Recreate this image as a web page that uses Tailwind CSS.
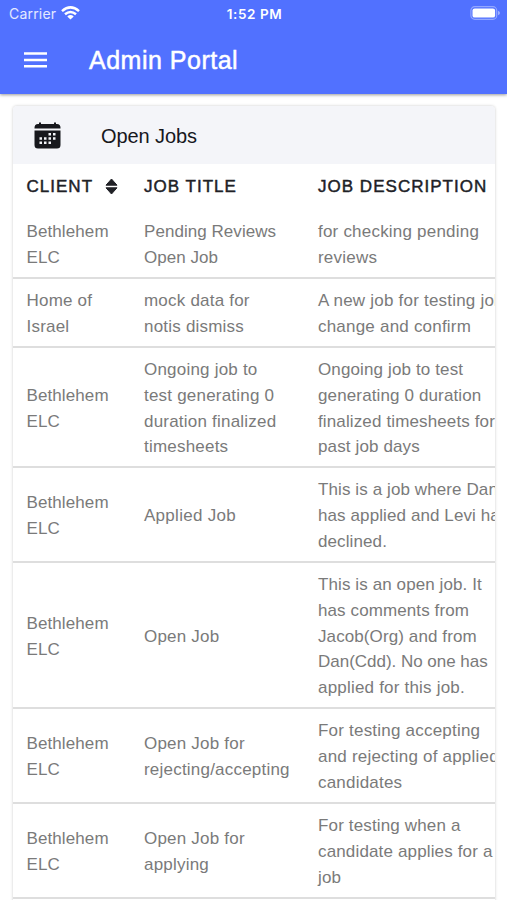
<!DOCTYPE html>
<html lang="en">
<head>
<meta charset="utf-8">
<title>Admin Portal</title>
<script src="https://cdn.jsdelivr.net/npm/@tailwindcss/browser@4"></script>
</head>
<body class="h-[900px] w-[507px] overflow-hidden bg-white font-['Liberation_Sans',Arial,sans-serif]">
<header class="relative h-[94px] bg-[#5171ff] text-white shadow-[0_1px_3px_rgba(0,0,0,0.4)]">
  <div class="grid h-7 grid-cols-3 items-center pr-[7px] pl-[9px]">
    <div class="flex items-center gap-[5px]">
      <span class="font-['Inter','Liberation_Sans',sans-serif] text-[14px] leading-7 tracking-[0.2px] text-white/85">Carrier</span>
      <svg class="-mt-[2px] h-[14px] w-[19px]" viewBox="0 0 19 14" fill="none" stroke="currentColor" stroke-width="2.5"><path d="M1 5.1Q9.500-2.300 18 5.100M4 8.300Q9.500 3.600 15 8.300"/><path d="M9.500 13.600L6.300 10.400Q9.500 7.700 12.700 10.400Z" fill="currentColor" stroke="none"/></svg>
    </div>
    <span class="text-center font-['Inter','Liberation_Sans',sans-serif] text-[13.500px] leading-7 font-semibold tracking-[0.550px] whitespace-nowrap">1:52 PM</span>
    <svg class="mt-[-2px] h-[14px] w-[30px] justify-self-end" viewBox="0 0 30 14"><rect x=".9" y=".7" width="25.800" height="12.600" rx="3.800" fill="none" stroke="#fff" stroke-opacity=".38" stroke-width="1.200"/><rect x="2.500" y="2.400" width="22.600" height="9.200" rx="2.200" fill="#fff"/><path d="M28 4.700Q30 5.500 30 7T28 9.300Z" fill="#fff" fill-opacity=".45"/></svg>
  </div>
  <div class="flex h-[64px] items-center pl-6">
    <svg class="h-4 w-[23px]" viewBox="0 0 23 16" stroke="currentColor" stroke-width="2.600"><path d="M0 1.500H23M0 8H23M0 14.300H23"/></svg>
    <h1 class="ml-[42px] text-[25px] leading-8 tracking-[0.500px] whitespace-nowrap [-webkit-text-stroke:0.5px_currentColor]">Admin Portal</h1>
  </div>
</header>
<main class="px-[13px] pt-3">
  <section class="h-[820px] w-[482px] overflow-hidden rounded-t-[4px] bg-white shadow-[0_0_3px_rgba(0,0,0,0.22)]">
    <div class="flex h-[58px] items-center bg-[#f4f5f9] pl-[21px] text-[#17181d]">
      <svg class="h-[27px] w-[27px]" viewBox="0 0 27 27" fill="currentColor"><path d="M5 .5h2v1.500h13V.5h2v1.500h1q3.500 0 3.500 3.800V6.500H.5V5.800Q.5 2 4 2h1ZM.5 8.500h26V23q0 3.500-3.500 3.500H4Q.5 26.500.5 23Z"/><path fill="#f4f5f9" d="M14.500 11h2.500v2.500h-2.500zM19 11h2.500v2.500h-2.500zM5.500 15.200h2.500v2.500h-2.500zM10 15.200h2.500v2.500h-2.500zM14.500 15.200h2.500v2.500h-2.500zM19 15.200h2.500v2.500h-2.500zM5.500 19.500h2.500v2.500h-2.500zM10 19.500h2.500v2.500h-2.500zM14.500 19.500h2.500v2.500h-2.500z"/></svg>
      <h2 class="ml-10 pt-px text-[20px] tracking-[-0.080px]">Open Jobs</h2>
    </div>
    <div class="grid h-[45px] grid-cols-[117.500px_174px_190px] items-center pl-[13.500px] text-[17px] tracking-[1.020px] whitespace-nowrap text-[#202126] [-webkit-text-stroke:0.45px_currentColor]">
      <div class="flex items-center gap-[12px]"><span>CLIENT</span><svg class="h-[17px] w-[13px]" viewBox="0 0 13 17" fill="currentColor" stroke="currentColor" stroke-linejoin="round"><path d="M6.500 1L12 7.200H1ZM6.500 16L1 9.800H12Z"/></svg></div>
      <div>JOB TITLE</div>
      <div>JOB DESCRIPTION</div>
    </div>
    <div class="text-[17px] leading-[25.700px] tracking-[0.210px] whitespace-nowrap text-[#7a7a7a] *:grid *:grid-cols-[117.500px_174px_190px] *:items-center *:border-b-2 *:border-[#dedede] *:pt-[3px] *:pl-[13.500px]">
      <div class="h-[70px]"><p class="tracking-[0.1px]">Bethlehem<br>ELC</p><p class="tracking-[0.05px]">Pending Reviews<br>Open Job</p><p>for checking pending<br>reviews</p></div>
      <div class="h-[69px]"><p>Home of<br>Israel</p><p>mock data for<br>notis dismiss</p><p>A new job for testing job<br>change and confirm</p></div>
      <div class="h-[120px]"><p class="tracking-[0.1px]">Bethlehem<br>ELC</p><p>Ongoing job to<br>test generating 0<br>duration finalized<br>timesheets</p><p class="tracking-[0.130px]">Ongoing job to test<br>generating 0 duration<br>finalized timesheets for<br>past job days</p></div>
      <div class="h-[95px]"><p class="tracking-[0.1px]">Bethlehem<br>ELC</p><p class="tracking-[0.280px]">Applied Job</p><p class="tracking-[0.1px]">This is a job where Dan<br>has applied and Levi has<br>declined.</p></div>
      <div class="h-[146px]"><p class="tracking-[0.1px]">Bethlehem<br>ELC</p><p>Open Job</p><p class="tracking-[0.1px]">This is an open job. It<br>has comments from<br>Jacob(Org) and from<br><span class="tracking-[-0.020px]">Dan(Cdd). No one has</span><br><span class="tracking-[0.200px]">applied for this job.</span></p></div>
      <div class="h-[95px]"><p class="tracking-[0.1px]">Bethlehem<br>ELC</p><p>Open Job for<br>rejecting/accepting</p><p>For testing accepting<br>and rejecting of applied<br>candidates</p></div>
      <div class="h-[95px]"><p class="tracking-[0.1px]">Bethlehem<br>ELC</p><p>Open Job for<br>applying</p><p class="tracking-[0.150px]">For testing when a<br>candidate applies for a<br>job</p></div>
    </div>
  </section>
</main>
</body>
</html>
